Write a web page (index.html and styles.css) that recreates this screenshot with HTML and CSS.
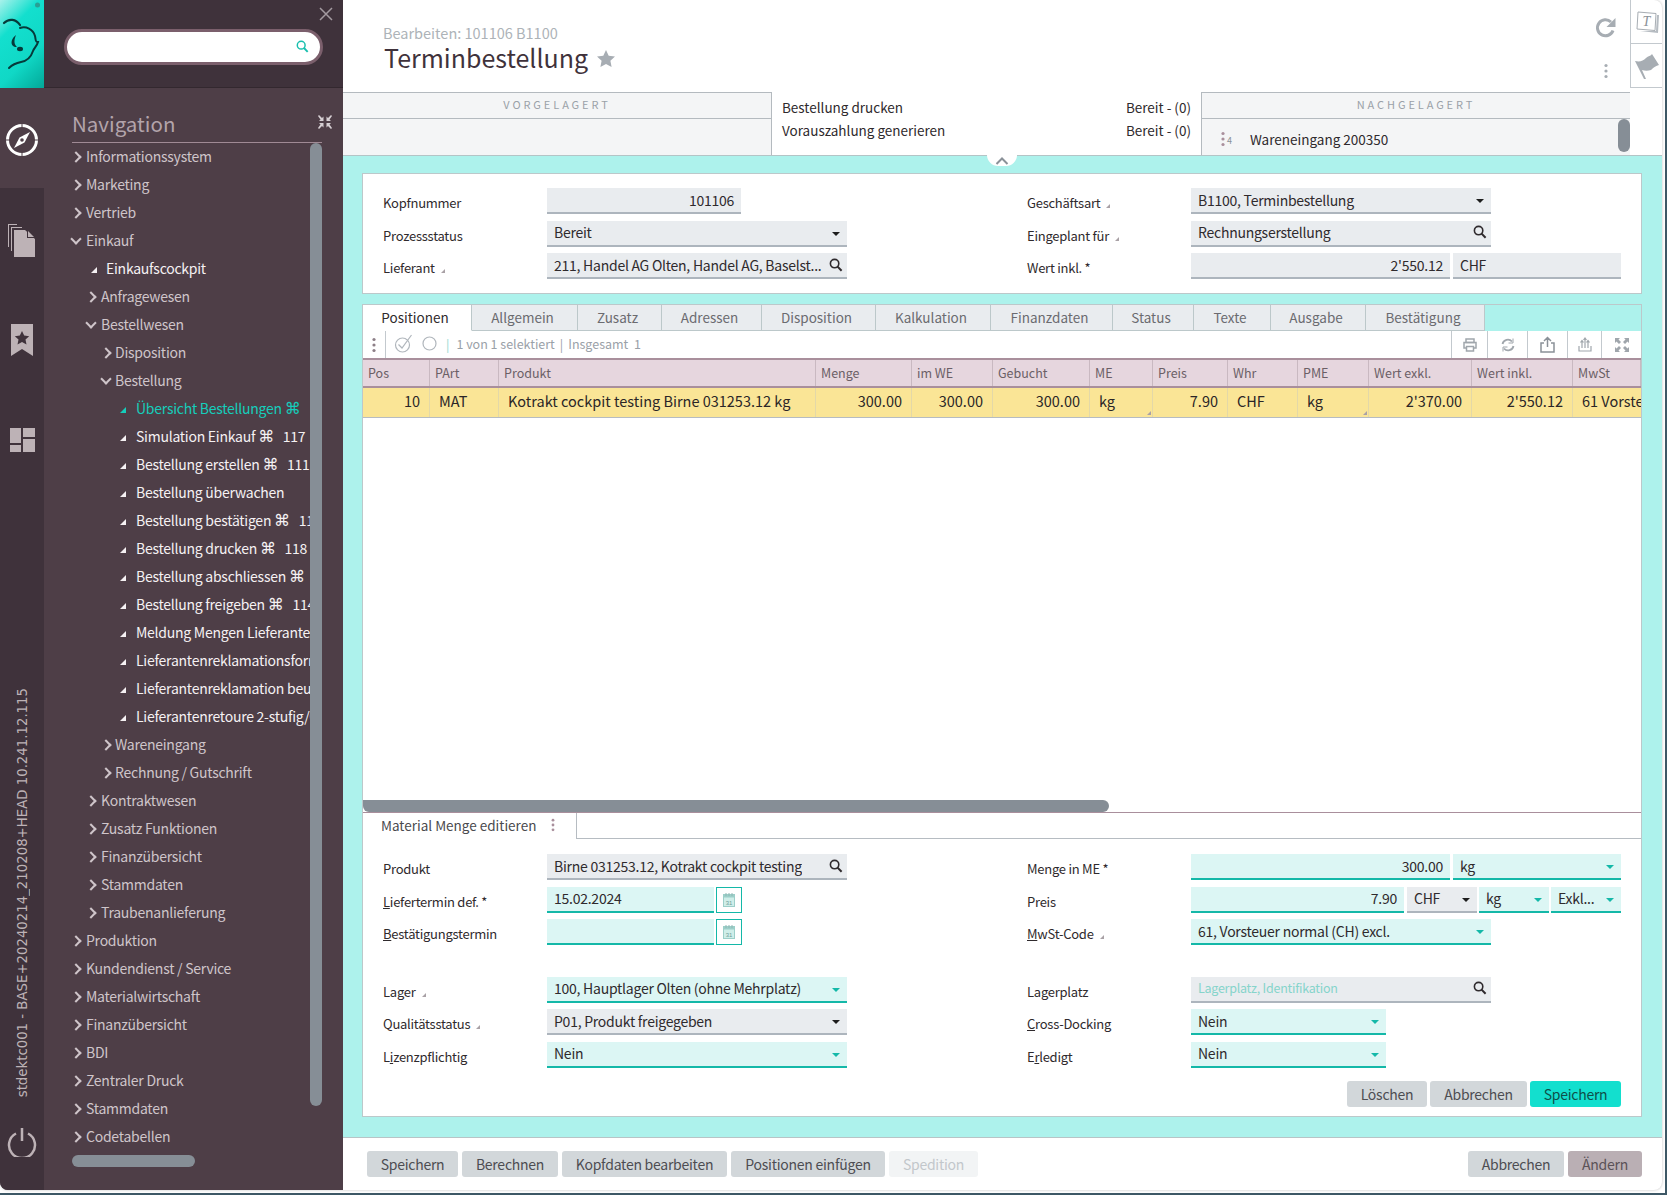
FILE: index.html
```html
<!DOCTYPE html>
<html lang="de">
<head>
    <meta charset="UTF-8">
    <title>Terminbestellung</title>
    <link rel="stylesheet" href="styles.css">
</head>
<body>

<svg class="sprites" width="0" height="0">
    <symbol id="i-search" viewBox="0 0 14 14"><circle cx="5.6" cy="5.6" r="4.2" fill="none" stroke="currentColor" stroke-width="1.6"/><path d="M8.6 8.6l4 4.2" stroke="currentColor" stroke-width="2" fill="none"/></symbol>
    <symbol id="i-kebab" viewBox="0 0 4 16"><circle cx="2" cy="2.5" r="1.6" fill="currentColor"/><circle cx="2" cy="8" r="1.6" fill="currentColor"/><circle cx="2" cy="13.5" r="1.6" fill="currentColor"/></symbol>
    <symbol id="i-cal" viewBox="0 0 12 14"><rect x="0.5" y="1.5" width="11" height="12" fill="#cfeee9" stroke="#9ccfc9"/><rect x="0.5" y="1.5" width="11" height="3" fill="#9ccfc9"/><path d="M3 0v3M6 0v3M9 0v3" stroke="#8fb8b4" stroke-width="1"/><text x="6" y="11.5" font-size="6" text-anchor="middle" fill="#6f9f9a" font-family="Liberation Sans">31</text></symbol>
</svg>

<div class="window">
    <aside class="sidebar">
        <div class="rail">
            <div class="logo">
                <svg width="44" height="88" viewBox="0 0 44 88" fill="none" stroke="#063a3a" stroke-linecap="round">
                    <circle cx="37.500" cy="5" r="2.500" fill="#2a9f94" stroke="none"/>
                    <path d="M4 23C9 18 16 19 20 25" stroke-width="2.200"/>
                    <path d="M20 28C26 26 33 29 35 36C36 40 35 42 38 42C37 46 34 48 33 51C31 57 27 61 21 62C16 63 12 65 9 68" stroke-width="2"/>
                    <path d="M16 35C12 38 10 43 13 46C14 47 16 47 17 47C15 45 13 42 16 35Z" fill="#063a3a" stroke="none"/>
                    <ellipse cx="20" cy="49" rx="3" ry="2.200" fill="#063a3a" stroke="none"/>
                </svg>
            </div>
            <div class="rail-item active">
                <svg width="34" height="34" viewBox="0 0 34 34">
                    <circle cx="17" cy="17" r="14.500" fill="none" stroke="#fff" stroke-width="3"/>
                    <path d="M17 1v5M17 28v5M1 17h5M28 17h5" stroke="#4e3e47" stroke-width="1"/>
                    <path d="M25 9l-5.500 10.500L9 25l5.500-10.500z" fill="#fff"/>
                    <circle cx="17" cy="17" r="1.800" fill="#4e3e47"/>
                </svg>
            </div>
            <div class="rail-item">
                <svg width="28" height="34" viewBox="0 0 28 34" fill="#bdb2b6">
                    <path d="M0 1h9v1H1v22H0zM3 4h11v1H4v23H3zM6 7h11l10 9v18H6z" />
                    <path d="M19 7l8 8h-8z" fill="#3f323b"/><path d="M20 8l6 6h-6z"/>
                </svg>
            </div>
            <div class="rail-item">
                <svg width="22" height="32" viewBox="0 0 22 32">
                    <path d="M0 0h22v32l-11-7-11 7z" fill="#bdb2b6"/>
                    <path d="M11 7l2.200 4.600 5 .6-3.700 3.400 1 5-4.500-2.500-4.500 2.500 1-5-3.700-3.400 5-.6z" fill="#3f323b"/>
                </svg>
            </div>
            <div class="rail-item">
                <svg width="25" height="24" viewBox="0 0 25 24" fill="#bdb2b6">
                    <rect x="0" y="0" width="11" height="15"/><rect x="13" y="0" width="12" height="9"/>
                    <rect x="0" y="17" width="11" height="7"/><rect x="13" y="11" width="12" height="13"/>
                </svg>
            </div>
            <div class="version">stdektc001 - BASE+20240214_210208+HEAD 10.241.12.115</div>
            <div class="power">
                <svg width="30" height="30" viewBox="0 0 30 30" fill="none" stroke="#bdb2b6" stroke-width="2.500">
                    <path d="M9 6.500a13 13 0 1 0 12 0"/><path d="M15 1v13"/>
                </svg>
            </div>
        </div>
        <div class="nav">
            <div class="nav-head">
                <svg class="close" width="14" height="14" viewBox="0 0 14 14"><path d="M1 1l12 12M13 1L1 13" stroke="#a39aa0" stroke-width="1.500"/></svg>
                <div class="search">
                    <svg class="search-icon" width="13" height="13"><use href="#i-search"/></svg>
                </div>
            </div>
            <div class="nav-body">
                <div class="nav-title">
                    <span>Navigation</span>
                    <svg width="14" height="14" viewBox="0 0 14 14" fill="#d6cfd3"><path d="M0 1l1-1 3 3 1.500-1.500V6H1l1.500-1.500zM14 1l-1-1-3 3-1.500-1.500V6H13l-1.500-1.500zM0 13l1 1 3-3 1.500 1.500V8H1l1.500 1.500zM14 13l-1 1-3-3-1.500 1.500V8H13l-1.500 1.500z"/></svg>
                </div>
                <ul class="tree">
                    <li class="l1 closed">Informationssystem</li>
                    <li class="l1 closed">Marketing</li>
                    <li class="l1 closed">Vertrieb</li>
                    <li class="l1 open">Einkauf</li>
                    <li class="l2 leaf">Einkaufscockpit</li>
                    <li class="l2 closed">Anfragewesen</li>
                    <li class="l2 open">Bestellwesen</li>
                    <li class="l3 closed">Disposition</li>
                    <li class="l3 open">Bestellung</li>
                    <li class="l4 leaf current">Übersicht Bestellungen <span class="cmd">⌘</span></li>
                    <li class="l4 leaf">Simulation Einkauf <span class="cmd">⌘</span> <span class="code">117</span></li>
                    <li class="l4 leaf">Bestellung erstellen <span class="cmd">⌘</span> <span class="code">111</span></li>
                    <li class="l4 leaf">Bestellung überwachen</li>
                    <li class="l4 leaf">Bestellung bestätigen <span class="cmd">⌘</span> <span class="code">112</span></li>
                    <li class="l4 leaf">Bestellung drucken <span class="cmd">⌘</span> <span class="code">118</span></li>
                    <li class="l4 leaf">Bestellung abschliessen <span class="cmd">⌘</span></li>
                    <li class="l4 leaf">Bestellung freigeben <span class="cmd">⌘</span> <span class="code">114</span></li>
                    <li class="l4 leaf">Meldung Mengen Lieferanten</li>
                    <li class="l4 leaf">Lieferantenreklamationsformular</li>
                    <li class="l4 leaf">Lieferantenreklamation beurteilen</li>
                    <li class="l4 leaf">Lieferantenretoure 2-stufig/Gutschrift</li>
                    <li class="l3 closed">Wareneingang</li>
                    <li class="l3 closed">Rechnung / Gutschrift</li>
                    <li class="l2 closed">Kontraktwesen</li>
                    <li class="l2 closed">Zusatz Funktionen</li>
                    <li class="l2 closed">Finanzübersicht</li>
                    <li class="l2 closed">Stammdaten</li>
                    <li class="l2 closed">Traubenanlieferung</li>
                    <li class="l1 closed">Produktion</li>
                    <li class="l1 closed">Kundendienst / Service</li>
                    <li class="l1 closed">Materialwirtschaft</li>
                    <li class="l1 closed">Finanzübersicht</li>
                    <li class="l1 closed">BDI</li>
                    <li class="l1 closed">Zentraler Druck</li>
                    <li class="l1 closed">Stammdaten</li>
                    <li class="l1 closed">Codetabellen</li>
                </ul>
                <div class="vbar"></div>
                <div class="hbar"></div>
            </div>
        </div>
    </aside>

    <main class="main">
        <header class="head">
            <div class="title-block">
                <div class="crumb">Bearbeiten: 101106 B1100</div>
                <h1>Terminbestellung <svg class="star" width="18" height="17" viewBox="0 0 18 17"><path d="M9 0l2.700 5.700 6.300.8-4.600 4.300 1.200 6.200L9 14l-5.600 3 1.200-6.200L0 6.500l6.300-.8z" fill="#a7adb3"/></svg></h1>
            </div>
            <div class="head-tools">
                <svg width="22" height="22" viewBox="0 0 22 22" fill="none"><path d="M18 13.500A8 8 0 1 1 16 5" stroke="#a7adb3" stroke-width="3"/><path d="M20.500 1v9h-9z" fill="#a7adb3"/></svg>
                <svg class="icon-kebab" width="4" height="16"><use href="#i-kebab"/></svg>
            </div>
            <div class="side-tabs">
                <div class="side-tab">
                    <svg width="24" height="26" viewBox="0 0 24 26"><path d="M5 22l18 2 1-18-2 0-1 16z" fill="#b6bcc2"/><path d="M3 3l18 1.500-1 17L2 20z" fill="#fff" stroke="#a7adb3"/><text x="11.500" y="17" font-size="14" font-style="italic" text-anchor="middle" fill="#8a9198" font-family="Liberation Serif">T</text></svg>
                </div>
                <div class="side-tab">
                    <svg width="24" height="26" viewBox="0 0 24 26"><path d="M0 8c5 1 8 0 11-3 2-2 5-2 6-4l7 11c-3 1-5 2-8 5-3 1-6 1-9 0L11 26l-2 0z" fill="#a7adb3"/></svg>
                </div>
            </div>
        </header>

        <section class="process">
            <div class="proc-box proc-left">
                <div class="proc-title">VORGELAGERT</div>
            </div>
            <div class="proc-mid">
                <div class="proc-line"><span>Bestellung drucken</span><span>Bereit - (0)</span></div>
                <div class="proc-line"><span>Vorauszahlung generieren</span><span>Bereit - (0)</span></div>
            </div>
            <div class="proc-box proc-right">
                <div class="proc-title">NACHGELAGERT</div>
                <div class="proc-row">
                    <svg class="proc-kebab" width="4" height="16"><use href="#i-kebab"/></svg>
                    <span class="proc-num">4</span>
                    <span>Wareneingang 200350</span>
                </div>
                <div class="proc-bar"></div>
            </div>
            <div class="proc-gap"></div>
        </section>

        <section class="content">
            <div class="toggle">
                <svg width="14" height="8" viewBox="0 0 14 8"><path d="M1.500 7L7 1.500 12.500 7" fill="none" stroke="#8a9198" stroke-width="2"/></svg>
            </div>

            <div class="card form-card">
                <div class="form">
                    <div class="form-col left">
                        <div class="row"><label>Kopfnummer</label><div class="cells"><div class="field w194 num">101106</div></div></div>
                        <div class="row"><label>Prozessstatus</label><div class="cells"><div class="field grow select">Bereit</div></div></div>
                        <div class="row"><label class="hint">Lieferant</label><div class="cells"><div class="field grow lookup"><span class="clip">211, Handel AG Olten, Handel AG, Baselst...</span><svg class="mag" width="14" height="14"><use href="#i-search"/></svg></div></div></div>
                    </div>
                    <div class="form-col right">
                        <div class="row"><label class="hint">Geschäftsart</label><div class="cells"><div class="field w300 select">B1100, Terminbestellung</div></div></div>
                        <div class="row"><label class="hint">Eingeplant für</label><div class="cells"><div class="field w300 lookup"><span class="clip">Rechnungserstellung</span><svg class="mag" width="14" height="14"><use href="#i-search"/></svg></div></div></div>
                        <div class="row"><label>Wert inkl. *</label><div class="cells"><div class="field w259 num">2'550.12</div><div class="field grow">CHF</div></div></div>
                    </div>
                </div>
            </div>

            <div class="card pos-card">
                <nav class="tabs">
                    <a class="tab on t-pos">Positionen</a>
                    <a class="tab t-all">Allgemein</a>
                    <a class="tab t-zus">Zusatz</a>
                    <a class="tab t-adr">Adressen</a>
                    <a class="tab t-dis">Disposition</a>
                    <a class="tab t-kal">Kalkulation</a>
                    <a class="tab t-fin">Finanzdaten</a>
                    <a class="tab t-sta">Status</a>
                    <a class="tab t-tex">Texte</a>
                    <a class="tab t-aus">Ausgabe</a>
                    <a class="tab t-bes">Bestätigung</a>
                </nav>
                <div class="toolbar">
                    <div class="tool-kebab"><svg width="4" height="16"><use href="#i-kebab"/></svg></div>
                    <div class="tool-left">
                        <svg width="20" height="20" viewBox="0 0 20 20" fill="none" stroke="#b0b6bc" stroke-width="1.200"><circle cx="8.500" cy="11" r="7"/><path d="M4.500 10.500l3.500 3.500L17.500 1"/></svg>
                        <svg width="15" height="15" viewBox="0 0 15 15" fill="none" stroke="#b0b6bc" stroke-width="1.200"><circle cx="7.500" cy="7.500" r="6.500"/></svg>
                        <span class="sel-sep">|</span>
                        <span>1 von 1 selektiert</span>
                        <span>|</span>
                        <span>Insgesamt&nbsp; 1</span>
                    </div>
                    <div class="tool-right">
                        <div class="tool-btn b-print"><svg width="14" height="14" viewBox="0 0 14 14" fill="none" stroke="#a0a6ac" stroke-width="1.500"><rect x="3" y="1" width="8" height="3.500"/><rect x="1" y="4.500" width="12" height="5.500"/><rect x="3.500" y="8.500" width="7" height="4.500" fill="#fff"/></svg></div>
                        <div class="tool-btn b-sync"><svg width="14" height="14" viewBox="0 0 14 14" fill="none" stroke="#a0a6ac" stroke-width="1.800"><path d="M1.500 6a5.500 5.500 0 0 1 9.500-2.500M12.500 8A5.500 5.500 0 0 1 3 10.500"/><path d="M12 0.500v4.500H7.500M2 13.500V9h4.500" stroke-width="1"/></svg></div>
                        <div class="tool-btn b-up"><svg width="15" height="17" viewBox="0 0 15 17" fill="none" stroke="#8a9198" stroke-width="1.500"><path d="M4 7H1v9h13V7h-3M7.500 11V1.500M4 5l3.500-3.500L11 5"/></svg></div>
                        <div class="tool-btn b-down"><svg width="14" height="15" viewBox="0 0 14 15" fill="none" stroke="#a0a6ac" stroke-width="1.200"><path d="M1 9v5h12V9M4 11V4M7 11V1M10 11V4M2.500 5.500L4 3.500l1.500 2M8.500 3L7 1 5.500 3M8.500 5.500L10 3.500l1.500 2"/></svg></div>
                        <div class="tool-btn b-full"><svg width="14" height="14" viewBox="0 0 14 14" fill="#a0a6ac"><path d="M0 0h5L3.500 1.500 6 4 4 6 1.500 3.500 0 5zM14 0H9l1.500 1.500L8 4l2 2 2.500-2.500L14 5zM0 14h5l-1.500-1.500L6 10 4 8l-2.500 2.500L0 9zM14 14H9l1.500-1.500L8 10l2-2 2.500 2.500L14 9z"/></svg></div>
                    </div>
                </div>
                <div class="grid-row grid-head">
                    <div>Pos</div><div>PArt</div><div>Produkt</div><div>Menge</div><div>im WE</div><div>Gebucht</div><div>ME</div><div>Preis</div><div>Whr</div><div>PME</div><div>Wert exkl.</div><div>Wert inkl.</div><div>MwSt</div>
                </div>
                <div class="grid-row grid-data">
                    <div class="r">10</div><div>MAT</div><div>Kotrakt cockpit testing Birne 031253.12 kg</div><div class="r">300.00</div><div class="r">300.00</div><div class="r">300.00</div><div class="mark">kg</div><div class="r">7.90</div><div>CHF</div><div class="mark">kg</div><div class="r">2'370.00</div><div class="r">2'550.12</div><div class="last">61 Vorsteuer normal</div>
                </div>
                <div class="grid-empty"></div>
                <div class="grid-scroll"><div class="grid-thumb"></div></div>

                <div class="sub-tabs">
                    <div class="sub-tab">Material Menge editieren <svg width="4" height="14"><use href="#i-kebab"/></svg></div>
                </div>
                <div class="form sub-form">
                    <div class="form-col left">
                        <div class="row"><label>Produkt</label><div class="cells"><div class="field grow lookup"><span class="clip">Birne 031253.12, Kotrakt cockpit testing</span><svg class="mag" width="14" height="14"><use href="#i-search"/></svg></div></div></div>
                        <div class="row"><label><u>L</u>iefertermin def. *</label><div class="cells"><div class="field edit w167">15.02.2024</div><div class="cal"><svg width="12" height="14"><use href="#i-cal"/></svg></div></div></div>
                        <div class="row"><label><u>B</u>estätigungstermin</label><div class="cells"><div class="field edit w167"></div><div class="cal"><svg width="12" height="14"><use href="#i-cal"/></svg></div></div></div>
                        <div class="row group"><label class="hint">Lager</label><div class="cells"><div class="field edit grow select">100, Hauptlager Olten (ohne Mehrplatz)</div></div></div>
                        <div class="row"><label class="hint">Qualitätsstatus</label><div class="cells"><div class="field grow select">P01, Produkt freigegeben</div></div></div>
                        <div class="row"><label>L<u>i</u>zenzpflichtig</label><div class="cells"><div class="field edit grow select">Nein</div></div></div>
                    </div>
                    <div class="form-col right">
                        <div class="row"><label>Menge in ME *</label><div class="cells"><div class="field edit w259 num">300.00</div><div class="field edit grow select">kg</div></div></div>
                        <div class="row"><label>Preis</label><div class="cells"><div class="field edit w213 num">7.90</div><div class="field w70 select">CHF</div><div class="field edit w70 select tight">kg</div><div class="field edit w70 select tight">Exkl...</div></div></div>
                        <div class="row"><label class="hint"><u>M</u>wSt-Code</label><div class="cells"><div class="field edit w300 select">61, Vorsteuer normal (CH) excl.</div></div></div>
                        <div class="row group"><label>Lagerplatz</label><div class="cells"><div class="field w300 lookup"><span class="clip placeholder">Lagerplatz, Identifikation</span><svg class="mag" width="14" height="14"><use href="#i-search"/></svg></div></div></div>
                        <div class="row"><label><u>C</u>ross-Docking</label><div class="cells"><div class="field edit w195 select">Nein</div></div></div>
                        <div class="row"><label>E<u>r</u>ledigt</label><div class="cells"><div class="field edit w195 select">Nein</div></div></div>
                    </div>
                </div>
                <div class="sub-actions">
                    <button class="btn w80">Löschen</button>
                    <button class="btn w97">Abbrechen</button>
                    <button class="btn primary w91">Speichern</button>
                </div>
            </div>
        </section>

        <footer class="footer">
            <button class="btn f1">Speichern</button>
            <button class="btn f2">Berechnen</button>
            <button class="btn f3">Kopfdaten bearbeiten</button>
            <button class="btn f4">Positionen einfügen</button>
            <button class="btn off f5">Spedition</button>
            <button class="btn f6">Abbrechen</button>
            <button class="btn mauve f7">Ändern</button>
        </footer>
    </main>
</div>

</body>
</html>
```

FILE: styles.css
```css
* {
    box-sizing: border-box;
}
html, body {
    margin: 0;
    height: 100%;
}
body {
    width: 1667px;
    height: 1195px;
    overflow: hidden;
    background-color: #fff;
    border-right: 2px solid #3d5866;
    border-bottom: 2px solid #3d5866;
    font-family: "Noto Sans CJK SC", "Noto Sans", sans-serif;
    font-size: 13.5px;
    line-height: 20px;
    color: #2f2a2d;
}
.sprites {
    position: absolute;
}
.window {
    display: flex;
    width: 1662px;
    height: 1190px;
    background-color: #fff;
    border-radius: 0 8px 8px 8px;
    overflow: hidden;
    box-shadow: 0 0 3px rgba(0, 0, 0, 0.25);
}

/* sidebar */
.sidebar {
    display: flex;
    flex: 0 0 343px;
    background-color: #4e3e47;
}
.rail {
    display: flex;
    flex-direction: column;
    align-items: center;
    flex: 0 0 44px;
    background-color: #3f323b;
}
.logo {
    height: 88px;
    width: 44px;
    background: linear-gradient(135deg, #a9f2eb 0%, #13dfce 30%, #10d8c6 65%, #03a898 100%);
}
.rail-item {
    display: flex;
    align-items: center;
    justify-content: center;
    height: 100px;
    width: 44px;
    padding-top: 4px;
}
.rail-item.active {
    background-color: #4e3e47;
}
.version {
    margin-top: auto;
    margin-bottom: 30px;
    margin-left: 2px;
    writing-mode: vertical-rl;
    transform: rotate(180deg);
    white-space: nowrap;
    font-family: "DejaVu Sans", sans-serif;
    font-size: 13.3px;
    line-height: 20px;
    color: #bdb2b6;
}
.power {
    height: 63px;
}
.nav {
    flex: 1;
    display: flex;
    flex-direction: column;
    min-width: 0;
}
.nav-head {
    position: relative;
    height: 88px;
    padding: 29px 20px 0 20px;
    background-color: #3f323b;
    border-bottom: 1px solid #33282f;
}
.close {
    position: absolute;
    top: 7px;
    right: 10px;
}
.search {
    position: relative;
    height: 36px;
    width: 259px;
    background-color: #fff;
    border: 3px solid #7b5f6c;
    border-radius: 18px;
}
.search-icon {
    position: absolute;
    right: 11px;
    top: 8px;
    color: #18bfae;
}
.nav-body {
    position: relative;
    flex: 1;
    padding: 0 21px 0 28px;
}
.nav-title {
    display: flex;
    align-items: flex-end;
    justify-content: space-between;
    height: 55px;
    padding-bottom: 3px;
    border-bottom: 1px solid #a08a95;
    font-size: 20.5px;
    line-height: 32px;
    color: #b3a4ab;
}
.nav-title svg {
    margin-bottom: 10px;
    margin-right: -10px;
}
.tree {
    list-style: none;
    margin: -1px -7px 0 -28px;
    padding: 0;
    width: 266px;
    overflow: hidden;
}
.tree li {
    position: relative;
    height: 28px;
    line-height: 28px;
    font-size: 14px;
    letter-spacing: -0.25px;
    white-space: nowrap;
    color: #cfc5ca;
}
.l1 { padding-left: 42px; }
.l2 { padding-left: 57px; }
.l3 { padding-left: 71px; }
.l4 { padding-left: 92px; }
.l2.leaf { padding-left: 62px; }
.tree li.leaf {
    color: #f5f1f3;
}
.tree li.current {
    color: #15cdbb;
}
.closed::before, .open::before {
    content: "";
    position: absolute;
    top: 11px;
    width: 6px;
    height: 6px;
    border-top: 2px solid #cfc5ca;
    border-right: 2px solid #cfc5ca;
    transform: rotate(45deg);
}
.open::before {
    transform: rotate(135deg);
    top: 9px;
}
.l1::before { left: 28px; }
.l2::before { left: 43px; }
.l3::before { left: 58px; }
.leaf::before {
    content: "";
    position: absolute;
    top: 13px;
    border-style: solid;
    border-width: 0 0 6px 6px;
    border-color: transparent transparent #f5f1f3 transparent;
}
.l2.leaf::before { left: 47px; }
.l4.leaf::before { left: 76px; }
.current.leaf::before {
    border-bottom-color: #15cdbb;
}
.cmd {
    font-family: "DejaVu Sans", sans-serif;
    font-size: 16px;
    line-height: 16px;
}
.code {
    margin-left: 6px;
}
.vbar {
    position: absolute;
    top: 55px;
    left: 266px;
    width: 12px;
    height: 963px;
    border-radius: 6px;
    background-color: #868e96;
}
.hbar {
    position: absolute;
    top: 1067px;
    left: 28px;
    width: 123px;
    height: 12px;
    border-radius: 6px;
    background-color: #868e96;
}

/* main column */
.main {
    flex: 1;
    display: flex;
    flex-direction: column;
    min-width: 0;
}
.head {
    display: flex;
    height: 92px;
}
.title-block {
    flex: 1;
    padding: 24px 0 0 40px;
}
.crumb {
    font-size: 14.5px;
    line-height: 18px;
    color: #adb3b8;
}
h1 {
    display: flex;
    align-items: center;
    gap: 9px;
    margin: 2px 0 0 1px;
    font-size: 25px;
    font-weight: 400;
    line-height: 26px;
    color: #3f323b;
}
.star {
    margin-top: 3px;
}
.head-tools {
    display: flex;
    flex-direction: column;
    align-items: center;
    gap: 24px;
    width: 24px;
    margin-right: 12px;
    padding-top: 17px;
}
.icon-kebab {
    color: #a7adb3;
}
.side-tabs {
    flex: 0 0 32px;
    height: 88px;
    border-left: 1px solid #c3c9ce;
    border-bottom: 1px solid #c3c9ce;
}
.side-tab {
    display: flex;
    align-items: center;
    justify-content: center;
    height: 43px;
    overflow: hidden;
}
.side-tab + .side-tab {
    height: 45px;
    border-top: 1px solid #c3c9ce;
}

.process {
    display: flex;
    height: 63px;
}
.proc-box {
    position: relative;
    background-color: #f4f5f6;
    border-top: 1px solid #b4babf;
}
.proc-left {
    flex: 0 0 429px;
    border-right: 1px solid #b4babf;
}
.proc-right {
    flex: 0 0 429px;
    border-left: 1px solid #b4babf;
}
.proc-title {
    height: 26px;
    border-bottom: 1px solid #b4babf;
    text-align: center;
    font-size: 11px;
    line-height: 23px;
    letter-spacing: 2.9px;
    color: #9aa1a8;
}
.proc-mid {
    flex: 1;
    padding: 4px 10px 0 10px;
}
.proc-line {
    display: flex;
    justify-content: space-between;
    height: 23px;
    line-height: 23px;
}
.proc-row {
    display: flex;
    align-items: center;
    height: 35px;
    padding-left: 19px;
    padding-top: 4px;
}
.proc-kebab {
    color: #a98f9c;
}
.proc-num {
    width: 25px;
    margin-top: 4px;
    padding-left: 2px;
    font-size: 9px;
    color: #8a9198;
}
.proc-bar {
    position: absolute;
    top: 26px;
    right: 0;
    width: 12px;
    height: 33px;
    border-radius: 6px;
    background-color: #868e96;
}
.proc-gap {
    flex: 0 0 32px;
}

.content {
    position: relative;
    flex: 1;
    display: flex;
    flex-direction: column;
    padding: 17px 20px 20px 19px;
    background-color: #adf2ec;
    border-top: 1px solid #b4c4c6;
    border-bottom: 1px solid #b8c4c6;
    min-height: 0;
}
.toggle {
    position: absolute;
    top: -1px;
    left: 644px;
    width: 30px;
    height: 11px;
    text-align: center;
    line-height: 8px;
    background-color: #fff;
    border-radius: 0 0 15px 15px;
}
.toggle svg {
    margin-top: -4px;
}
.card {
    background-color: #fff;
    border: 1px solid #bcc8ca;
}
.form-card {
    height: 121px;
    padding: 14px 0 0 21px;
    flex: none;
}
.form {
    display: flex;
}
.form-col.left {
    flex: 0 0 643px;
}
.form-col.left .row {
    grid-template-columns: 163px 300px;
}
.form-col.left label {
    margin-left: -1px;
}
.form-col.right {
    flex: 0 0 594px;
}
.form-col.right .row {
    grid-template-columns: 164px 430px;
}
.row {
    display: grid;
    height: 26px;
    margin-bottom: 6.5px;
}
.row.group {
    margin-top: 31.5px;
}
.row label {
    padding-top: 5px;
    font-size: 13px;
    letter-spacing: -0.25px;
    line-height: 20px;
    color: #2f2a2d;
}
.hint::after {
    content: "";
    display: inline-block;
    margin-left: 6px;
    border-style: solid;
    border-width: 0 0 4px 4px;
    border-color: transparent transparent #a9a1a6 transparent;
}
.cells {
    display: flex;
    gap: 3px;
}
.field {
    position: relative;
    display: flex;
    align-items: center;
    height: 26px;
    padding: 0 7px 1px 7px;
    font-size: 14px;
    letter-spacing: -0.25px;
    white-space: nowrap;
    overflow: hidden;
    background-color: #e9ecef;
    border-bottom: 2px solid #adb5bd;
    color: #2f2a2d;
}
.field.edit {
    background-color: #dcf6f4;
    border-bottom-color: #14b8a8;
}
.grow { flex: 1; }
.w300 { flex: 0 0 300px; }
.w259 { flex: 0 0 259px; }
.w213 { flex: 0 0 213px; }
.w194 { flex: 0 0 194px; }
.w195 { flex: 0 0 195px; }
.w167 { flex: 0 0 167px; }
.w70 { flex: 0 0 70px; margin-right: -1px; }
.num {
    justify-content: flex-end;
}
.select::after {
    content: "";
    position: absolute;
    right: 7px;
    top: 11px;
    border-style: solid;
    border-width: 4px 4px 0 4px;
    border-color: #1d1d1d transparent transparent transparent;
}
.edit.select::after {
    border-top-color: #14b8a8;
}
.lookup {
    padding-right: 4px;
}
.lookup .mag {
    flex: none;
    margin-left: auto;
    color: #2f2a2d;
}
.clip {
    overflow: hidden;
    white-space: nowrap;
}
.placeholder {
    font-size: 12.5px;
    color: #86d4cb;
}
.cal {
    display: flex;
    align-items: center;
    justify-content: center;
    flex: 0 0 26px;
    margin-left: -1px;
    height: 26px;
    border: 1px solid #14b8a8;
}

.pos-card {
    display: flex;
    flex-direction: column;
    flex: 1;
    min-height: 0;
    margin-top: 10px;
    background-color: #fff;
}
.tabs {
    display: flex;
    flex: none;
    height: 26px;
    background-color: #adf2ec;
}
.tab {
    height: 26px;
    padding-right: 4px;
    text-align: center;
    font-size: 13.5px;
    line-height: 24px;
    color: #6b6b70;
    background-color: #e9ecef;
    border-right: 1px solid #bcc8ca;
    border-bottom: 1px solid #bcc8ca;
}
.tab.on {
    background-color: #fff;
    border-bottom-color: #fff;
    color: #2f2a2d;
}
.t-pos { width: 109px; }
.t-all { width: 106px; }
.t-zus { width: 84px; }
.t-adr { width: 100px; }
.t-dis { width: 114px; }
.t-kal { width: 115px; }
.t-fin { width: 122px; }
.t-sta { width: 81px; }
.t-tex { width: 77px; }
.t-aus { width: 95px; }
.t-bes { width: 119px; }
.toolbar {
    display: flex;
    align-items: stretch;
    flex: none;
    height: 27px;
}
.tool-kebab {
    display: flex;
    align-items: center;
    justify-content: center;
    width: 23px;
    border-right: 1px solid #c3c9ce;
}
.tool-kebab svg {
    color: #8d7f87;
}
.tool-left {
    display: flex;
    align-items: center;
    gap: 5px;
    padding: 0 0 2px 8px;
    font-size: 12.5px;
    color: #9aa1a8;
}
.tool-left svg + svg {
    margin-left: 3px;
}
.sel-sep {
    margin: 0 2px 0 4px;
    color: #8fd8d0;
}
.tool-right {
    display: flex;
    margin-left: auto;
}
.tool-btn {
    display: flex;
    align-items: center;
    justify-content: center;
    border-left: 1px solid #c3c9ce;
}
.b-print { width: 36px; }
.b-sync { width: 40px; }
.b-up { width: 40px; }
.b-down { width: 34px; }
.b-full { width: 40px; }
.grid-row {
    display: grid;
    flex: none;
    grid-template-columns: 67px 69px 317px 96px 81px 97px 63px 75px 70px 71px 103px 101px 68px;
}
.grid-row > div {
    position: relative;
    overflow: hidden;
    white-space: nowrap;
}
.grid-head {
    height: 30px;
    background-color: #e6d6de;
    border-top: 2px solid #a98f9c;
    border-bottom: 2px solid #a98f9c;
    font-size: 12.5px;
    line-height: 26px;
    color: #6b5f66;
}
.grid-head > div {
    padding-left: 5px;
    border-right: 1px solid #c9b9c1;
}
.grid-data {
    height: 30px;
    background-color: #fae596;
    border-bottom: 1px solid #b6bcc2;
    font-size: 14.5px;
    line-height: 25px;
    color: #2a2527;
}
.grid-data > div {
    padding: 0 9px;
    border-right: 1px solid #e3d8a8;
}
.grid-data > .r {
    text-align: right;
}
.grid-data > .last {
    padding-right: 0;
    border-right: none;
}
.mark::after {
    content: "";
    position: absolute;
    right: 1px;
    bottom: 2px;
    border-style: solid;
    border-width: 0 0 4px 4px;
    border-color: transparent transparent #a9a1a6 transparent;
}
.grid-empty {
    flex: 1;
}
.grid-scroll {
    flex: none;
    height: 13px;
    border-bottom: 1px solid #a98f9c;
}
.grid-thumb {
    width: 746px;
    height: 12px;
    border-radius: 0 6px 6px 6px;
    background-color: #868e96;
}
.sub-tabs {
    flex: none;
    height: 26px;
    border-bottom: 1px solid #b6bcc2;
}
.sub-tab {
    display: flex;
    align-items: center;
    gap: 15px;
    width: 214px;
    height: 26px;
    padding: 0 0 3px 18px;
    font-size: 13.5px;
    color: #4a4a4e;
    background-color: #fff;
    border-right: 1px solid #b6bcc2;
}
.sub-tab svg {
    color: #a98f9c;
}
.sub-form {
    flex: none;
    padding: 15px 0 0 21px;
}
.sub-actions {
    display: flex;
    flex: none;
    justify-content: flex-end;
    gap: 3px;
    height: 42px;
    padding: 7px 20px 0 0;
}
.btn {
    height: 26px;
    padding: 0;
    border: none;
    border-radius: 3px;
    font-family: inherit;
    font-size: 14px;
    letter-spacing: -0.25px;
    line-height: 24px;
    color: #4d4d52;
    background-color: #d2d7da;
}
.primary {
    background-color: #13dfce;
    color: #0e4f49;
}
.off {
    background-color: #f2f4f5;
    color: #c2c7cb;
}
.mauve {
    background-color: #baafb4;
    color: #5b5257;
}
.w80 { width: 80px; }
.w97 { width: 97px; }
.w91 { width: 91px; }
.footer {
    display: flex;
    flex: none;
    gap: 4px;
    height: 52px;
    padding: 13px 20px 0 24px;
}
.f1 { width: 91px; }
.f2 { width: 96px; }
.f3 { width: 165px; }
.f4 { width: 154px; }
.f5 { width: 89px; }
.f6 { width: 96px; margin-left: auto; }
.f7 { width: 74px; }
```
